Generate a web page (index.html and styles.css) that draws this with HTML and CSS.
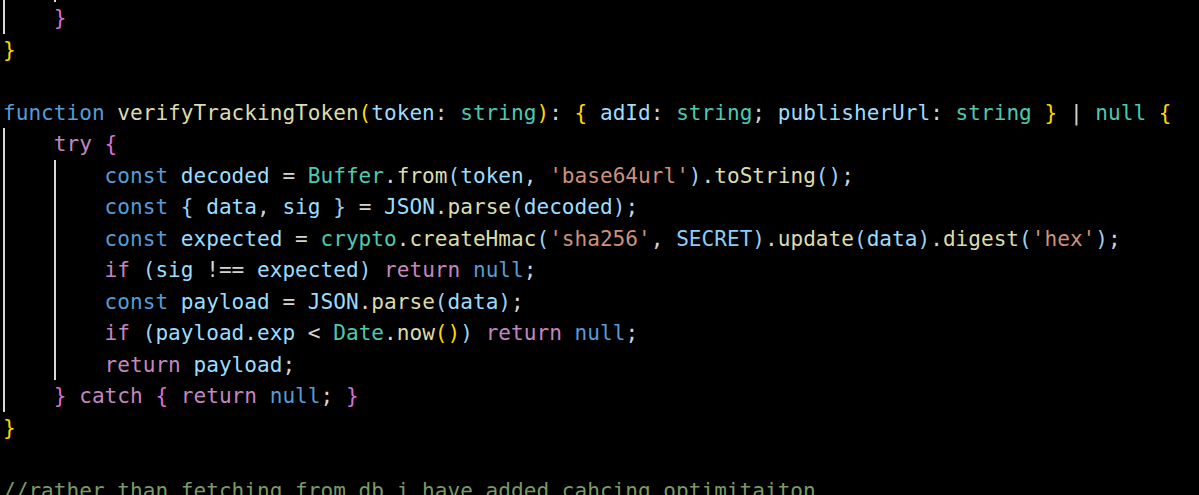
FILE: index.html
```html
<!DOCTYPE html>
<html lang="en">
<head>
<meta charset="utf-8">
<title>verifyTrackingToken</title>
<link rel="stylesheet" href="styles.css">
</head>
<body>
<main class="editor">
  <div class="line partial"><span class="ind"></span><span class="ind"></span></div>
  <div class="line"><span class="ind"></span><span class="code"><span class="b2">}</span></span></div>
  <div class="line"><span class="code"><span class="b1">}</span></span></div>
  <div class="line"></div>
  <div class="line"><span class="code"><span class="k">function</span> <span class="f">verifyTrackingToken</span><span class="b1">(</span><span class="v">token</span>: <span class="t">string</span><span class="b1">)</span>: <span class="b1">{</span> <span class="v">adId</span>: <span class="t">string</span>; <span class="v">publisherUrl</span>: <span class="t">string</span> <span class="b1">}</span> | <span class="t">null</span> <span class="b1">{</span></span></div>
  <div class="line"><span class="ind"></span><span class="code"><span class="c">try</span> <span class="b2">{</span></span></div>
  <div class="line"><span class="ind"></span><span class="ind"></span><span class="code"><span class="k">const</span> <span class="v">decoded</span> = <span class="t">Buffer</span>.<span class="f">from</span><span class="b3">(</span><span class="v">token</span>, <span class="s">'base64url'</span><span class="b3">)</span>.<span class="f">toString</span><span class="b3">()</span>;</span></div>
  <div class="line"><span class="ind"></span><span class="ind"></span><span class="code"><span class="k">const</span> <span class="b3">{</span> <span class="v">data</span>, <span class="v">sig</span> <span class="b3">}</span> = <span class="v">JSON</span>.<span class="f">parse</span><span class="b3">(</span><span class="v">decoded</span><span class="b3">)</span>;</span></div>
  <div class="line"><span class="ind"></span><span class="ind"></span><span class="code"><span class="k">const</span> <span class="v">expected</span> = <span class="t">crypto</span>.<span class="f">createHmac</span><span class="b3">(</span><span class="s">'sha256'</span>, <span class="cn">SECRET</span><span class="b3">)</span>.<span class="f">update</span><span class="b3">(</span><span class="v">data</span><span class="b3">)</span>.<span class="f">digest</span><span class="b3">(</span><span class="s">'hex'</span><span class="b3">)</span>;</span></div>
  <div class="line"><span class="ind"></span><span class="ind"></span><span class="code"><span class="c">if</span> <span class="b3">(</span><span class="v">sig</span> !== <span class="v">expected</span><span class="b3">)</span> <span class="c">return</span> <span class="k">null</span>;</span></div>
  <div class="line"><span class="ind"></span><span class="ind"></span><span class="code"><span class="k">const</span> <span class="v">payload</span> = <span class="v">JSON</span>.<span class="f">parse</span><span class="b3">(</span><span class="v">data</span><span class="b3">)</span>;</span></div>
  <div class="line"><span class="ind"></span><span class="ind"></span><span class="code"><span class="c">if</span> <span class="b3">(</span><span class="v">payload</span>.<span class="v">exp</span> &lt; <span class="t">Date</span>.<span class="f">now</span><span class="b1">()</span><span class="b3">)</span> <span class="c">return</span> <span class="k">null</span>;</span></div>
  <div class="line"><span class="ind"></span><span class="ind"></span><span class="code"><span class="c">return</span> <span class="v">payload</span>;</span></div>
  <div class="line"><span class="ind"></span><span class="code"><span class="b2">}</span> <span class="c">catch</span> <span class="b2">{</span> <span class="c">return</span> <span class="k">null</span>; <span class="b2">}</span></span></div>
  <div class="line"><span class="code"><span class="b1">}</span></span></div>
  <div class="line"></div>
  <div class="line"><span class="code cm">//rather than fetching from db i have added cahcing optimitaiton</span></div>
</main>
</body>
</html>
```
FILE: styles.css
```css
html, body {
  margin: 0;
  padding: 0;
  background: #000000;
  height: 100%;
  overflow: hidden;
}

.editor {
  font-family: "DejaVu Sans Mono", "Liberation Mono", monospace;
  font-size: 21.1px;
  color: #d4d4d4;
  padding-left: 3px;
}

.line {
  display: flex;
  height: 31.5px;
  line-height: 31.5px;
}

.line.partial {
  height: 2px;
}

.ind {
  flex: none;
  width: 4ch;
  background: linear-gradient(90deg, #d9d9d9 0 1.5px, transparent 1.5px);
}

.code {
  white-space: pre;
}

.k { color: #569cd6; }
.c { color: #c586c0; }
.f { color: #dcdcaa; }
.v { color: #9cdcfe; }
.cn { color: #8cccf8; }
.t { color: #4ec9b0; }
.s { color: #ce9178; }
.b1 { color: #ffd700; }
.b2 { color: #da70d6; }
.b3 { color: #9cd0f5; }
.cm { color: #7a9a62; }
```
